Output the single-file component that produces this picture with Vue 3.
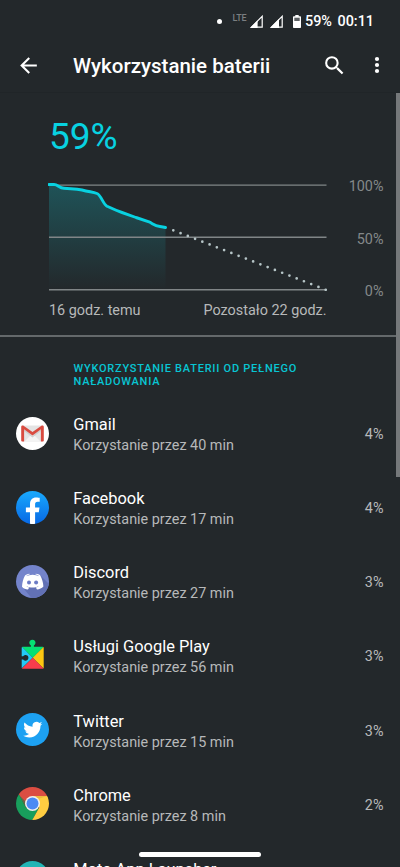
<script setup>
const apps = [
  { id: 'gmail', name: 'Gmail', time: '40 min', share: '4%' },
  { id: 'facebook', name: 'Facebook', time: '17 min', share: '4%' },
  { id: 'discord', name: 'Discord', time: '27 min', share: '3%' },
  { id: 'play', name: 'Usługi Google Play', time: '56 min', share: '3%' },
  { id: 'twitter', name: 'Twitter', time: '15 min', share: '3%' },
  { id: 'chrome', name: 'Chrome', time: '8 min', share: '2%' },
  { id: 'moto', name: 'Moto App Launcher' },
]
</script>

<template>
  <div class="screen">
    <header class="status">
      <span class="dot"></span>
      <span class="lte">LTE</span>
      <svg class="signal" viewBox="0 0 13 13"><path d="M1.3 12.2H12.2V1.3Z" fill="none" stroke="#fff" stroke-width="1.2" /><path d="M0 13H7.6V5.4Z" fill="#fff" /></svg>
      <svg class="signal second" viewBox="0 0 13 13"><path d="M1.3 12.2H12.2V1.3Z" fill="none" stroke="#fff" stroke-width="1.2" /><path d="M0 13H9V4Z" fill="#fff" /></svg>
      <svg class="battery" viewBox="0 0 8 13"><path d="M2.3 0H5.7V1.3H7.2Q8 1.3 8 2.1V12.2Q8 13 7.2 13H.8Q0 13 0 12.2V2.1Q0 1.3.8 1.3H2.3Z" fill="#fff" /><path d="M1.3 2.7H6.7V6H1.3Z" fill="#5d6163" /></svg>
      <span class="level">59%</span>
      <span class="clock">00:11</span>
    </header>

    <nav class="bar">
      <svg class="back" viewBox="0 0 24 24"><path d="M20 11H7.83l5.59-5.59L12 4l-8 8 8 8 1.41-1.41L7.83 13H20z" fill="#fff" /></svg>
      <h1>Wykorzystanie baterii</h1>
      <svg class="search" viewBox="0 0 24 24"><path d="M15.5 14h-.79l-.28-.27A6.47 6.47 0 0 0 16 9.5 6.5 6.5 0 1 0 9.5 16c1.61 0 3.09-.59 4.23-1.57l.27.28v.79l5 4.99L20.49 19zm-6 0a4.5 4.5 0 1 1 0-9 4.5 4.5 0 0 1 0 9z" fill="#fff" /></svg>
      <svg class="more" viewBox="0 0 6 18"><circle cx="3" cy="3" r="2.1" fill="#fff" /><circle cx="3" cy="9" r="2.1" fill="#fff" /><circle cx="3" cy="15" r="2.1" fill="#fff" /></svg>
    </nav>

    <main class="content">
      <section class="summary">
        <div class="percent">59%</div>
        <div class="graph">
          <svg class="plot" viewBox="0 0 280 110">
            <defs>
              <linearGradient id="fade" x1="0" y1="0" x2="0" y2="1">
                <stop offset="0" stop-color="#14c8d2" stop-opacity=".27" />
                <stop offset="1" stop-color="#14c8d2" stop-opacity="0" />
              </linearGradient>
            </defs>
            <path d="M1 3.5H6C10 3.5 11 7 16 7.3C25 8 28 7.8 34 9C42 11 45 11 49 12.5C53 14 55 23 59 25.2C65 28 68 29.5 74 31.5L88 36.5L101 40.8C106 43.5 107 45 117.5 46.3V109H1Z" fill="url(#fade)" />
            <path d="M1 4.1H278.500M1 56.3H278.500M1 108.700H278.500" stroke="#808587" stroke-width="1.4" />
            <path d="M125.3 49.3L277.8 108.8" stroke="#b6c5c7" stroke-width="2.7" stroke-linecap="round" stroke-dasharray="0 7.79" />
            <path d="M1 3.5H6C10 3.5 11 7 16 7.3C25 8 28 7.8 34 9C42 11 45 11 49 12.5C53 14 55 23 59 25.2C65 28 68 29.5 74 31.5L88 36.5L101 40.8C106 43.5 107 45 112 45.5Q115 45.800 117.5 46.5" fill="none" stroke="#08d2e1" stroke-width="2.9" stroke-linecap="round" stroke-linejoin="round" />
          </svg>
          <div class="scale"><span>100%</span><span>50%</span><span>0%</span></div>
        </div>
        <div class="range"><span>16 godz. temu</span><span class="left">Pozostało 22 godz.</span></div>
      </section>

      <h2>WYKORZYSTANIE BATERII OD PEŁNEGO NAŁADOWANIA</h2>

      <ul>
        <li v-for="app in apps" :key="app.id">
          <svg v-if="app.id === 'gmail'" class="icon" viewBox="0 0 33 33">
            <circle cx="16.5" cy="16.5" r="16.5" fill="#fff" />
            <path d="M6.5 8.5H26.5V24.5H6.5Z" fill="#e4e4e4" />
            <path d="M8.5 24.5L16.5 16.5L24.5 24.5Z" fill="#f4f4f4" />
            <path d="M8 11.5L16.5 19L25 11.5V14L16.5 20.5L8 14Z" fill="#cfcfcf" />
            <path d="M5.2 10C5.2 8.8 6 8.4 7.2 8.5L16.5 15.1L25.8 8.5C27 8.4 27.8 8.8 27.8 10V23.5Q27.8 24.5 26.8 24.5H24.900V12.300L16.5 18.400L8.100 12.300V24.500H6.200Q5.200 24.500 5.200 23.500Z" fill="#d94b40" />
          </svg>

          <svg v-else-if="app.id === 'facebook'" class="icon" viewBox="0 0 33 33">
            <defs><linearGradient id="fb" x1="0" y1="0" x2="0" y2="1"><stop offset="0" stop-color="#19a9fc" /><stop offset="1" stop-color="#0768e5" /></linearGradient></defs>
            <circle cx="16.5" cy="16.5" r="16.5" fill="url(#fb)" />
            <path d="M14 32.8V21.2H9.9V16.5H14V13C14 8.9 16.3 6.5 20.1 6.5C21.5 6.5 23.7 6.8 23.7 6.8V10.700H21.600C19.700 10.700 19.100 11.800 19.100 13V16.500H23.500L22.800 21.200H19.100V32.800Q16.500 33.200 14 32.800Z" fill="#fff" />
          </svg>

          <svg v-else-if="app.id === 'discord'" class="icon" viewBox="0 0 33 33">
            <defs><clipPath id="disc"><circle cx="16.5" cy="16.5" r="16.5" /></clipPath></defs>
            <circle cx="16.5" cy="16.5" r="16.5" fill="#7484cb" />
            <path d="M24 10L36 22V36H18L8 24Z" fill="#6271b5" clip-path="url(#disc)" />
            <path d="M13.5 8.8C11.2 8.9 9.7 9.8 9 10.5C7.2 13.7 6.2 17.5 6 21.7C7.5 23.6 9.7 24.4 12 24.4L13.2 22.5C11.8 22.1 10.9 21.5 10.3 20.9C14 23 19 23 22.7 20.9C22.1 21.5 21.2 22.1 19.8 22.5L21 24.4C23.3 24.4 25.9 23.5 27.4 21.6C27.2 17.5 26 13.5 24.3 10.5C23.4 9.7 21.8 8.9 19.7 8.8L19.3 9.3C21.5 9.9 22.5 10.6 23.3 11.3C19 9.3 14.3 9.3 10 11.3C10.8 10.6 11.9 9.9 13.900 9.300Z" fill="#fff" />
            <circle cx="13" cy="17.5" r="2" fill="#6c7cc5" /><circle cx="20.1" cy="17.5" r="2" fill="#6c7cc5" />
          </svg>

          <svg v-else-if="app.id === 'play'" class="icon" viewBox="0 0 33 33">
            <defs>
              <clipPath id="puzzle"><path d="M6.7 7.7H14.9V6.5A3.1 3.1 0 1 1 17.9 6.500V7.700H26.700Q27.700 7.700 27.700 8.700V28.700Q27.700 29.700 26.700 29.700H6.700Q5.700 29.700 5.700 28.700V20.400H7.100A2.900 2.900 0 1 0 7.100 17.200H5.700V8.700Q5.700 7.700 6.700 7.700Z" /></clipPath>
            </defs>
            <g clip-path="url(#puzzle)">
              <path d="M5.5 7.7V0H28V7.7L16.7 18.7Z" fill="#05e073" />
              <path d="M5 7L16.7 18.7L5 30Z" fill="#23c8f5" />
              <path d="M28 7.4V30L16.7 18.7Z" fill="#fcc711" />
              <path d="M5.4 30L16.7 18.7L28 30Z" fill="#f83c4c" />
            </g>
          </svg>

          <svg v-else-if="app.id === 'twitter'" class="icon" viewBox="0 0 33 33">
            <circle cx="16.5" cy="16.5" r="16.5" fill="#1da1f2" />
            <path transform="translate(7.2 7) scale(.8)" d="M23.953 4.57a10 10 0 0 1-2.825.775 4.958 4.958 0 0 0 2.163-2.723c-.951.555-2.005.959-3.127 1.184a4.92 4.92 0 0 0-8.384 4.482C7.69 8.095 4.067 6.13 1.64 3.162a4.822 4.822 0 0 0-.666 2.475c0 1.71.87 3.213 2.188 4.096a4.904 4.904 0 0 1-2.228-.616v.06a4.923 4.923 0 0 0 3.946 4.827 4.996 4.996 0 0 1-2.212.085 4.936 4.936 0 0 0 4.604 3.417 9.867 9.867 0 0 1-6.102 2.105c-.39 0-.779-.023-1.17-.067a13.995 13.995 0 0 0 7.557 2.209c9.053 0 13.998-7.496 13.998-13.985 0-.21 0-.42-.015-.63A9.935 9.935 0 0 0 24 4.59z" fill="#fff" />
          </svg>

          <svg v-else-if="app.id === 'chrome'" class="icon" viewBox="0 0 33 33">
            <defs><clipPath id="chr"><circle cx="16.5" cy="16.5" r="16.5" /></clipPath></defs>
            <g clip-path="url(#chr)">
              <path d="M0 0H33V9H16.5L9.7 20L2.5 7.5Z" fill="#db4d42" />
              <path d="M3 7.5L9.8 20.2L17 24L22.8 21L15.8 34H0V7Z" fill="#189e5c" />
              <path d="M16.5 9H34V34H15.7L23.2 20.5Z" fill="#ffcd41" />
              <path d="M16.5 9H31L22 12Z" fill="#e0a93a" opacity=".55" />
              <path d="M9.8 20.2L3 8L10 15Z" fill="#137d4a" opacity=".6" />
            </g>
            <circle cx="16.5" cy="16.5" r="7.5" fill="#f1f1f1" /><circle cx="16.5" cy="16.5" r="6" fill="#4a8af4" />
          </svg>

          <svg v-else class="icon" viewBox="0 0 33 33"><circle cx="16.5" cy="16.5" r="16.5" fill="#21b5b5" /></svg>

          <div class="info">
            <div class="name">{{ app.name }}</div>
            <div class="time"><template v-if="app.time">Korzystanie przez {{ app.time }}</template></div>
          </div>
          <span v-if="app.share" class="share">{{ app.share }}</span>
        </li>
      </ul>
    </main>
    <div class="scrollbar"></div>
    <div class="home"></div>
  </div>
</template>

<style>
body { margin: 0; background: #23282b; }
</style>

<style scoped>
.screen { position: relative; width: 400px; height: 867px; overflow: hidden; background: #23282b; color: #fff; font-family: Roboto, sans-serif; display: flex; flex-direction: column; }
svg { display: block; flex: none; }
.status { box-sizing: border-box; height: 42px; flex: none; display: flex; align-items: center; padding-left: 216.5px; white-space: nowrap; }
.dot { width: 5px; height: 5px; border-radius: 50%; background: #fff; }
.lte { width: 28px; margin: -7px -10px 0 11px; font-size: 9px; font-weight: 500; line-height: 10px; letter-spacing: -.1px; color: #7b7f81; }
.signal { width: 13px; height: 13px; margin-left: -1px; }
.second { margin-left: 7.5px; }
.battery { width: 8px; height: 13px; margin-left: 10px; }
.level, .clock { font-size: 14.4px; font-weight: 500; line-height: 20px; margin-top: 2px; }
.level { width: 27px; margin-left: 4px; }
.clock { margin-left: 5.5px; }
.bar { box-sizing: border-box; height: 51px; flex: none; display: flex; align-items: center; padding: 0 20px 4px 16px; border-bottom: 1px solid #202528; }
.back { width: 25px; height: 25px; }
h1 { flex: 1; margin: 2px 0 0 32px; font-size: 20.5px; font-weight: 500; line-height: 26px; white-space: nowrap; }
.search { width: 25px; height: 25px; margin-right: 27px; }
.more { width: 6px; height: 18px; }
.content { flex: 1; min-height: 0; overflow: hidden; }
.summary { box-sizing: border-box; height: 244px; padding-top: 22px; border-bottom: 2px solid #64696b; }
.percent { margin-left: 49px; height: 44px; font-size: 37px; line-height: 44px; color: #08d2e1; }
.graph { display: flex; margin-top: 22px; padding: 0 16.5px 0 48px; height: 110px; justify-content: space-between; }
.plot { width: 280px; height: 110px; }
.scale { display: flex; flex-direction: column; justify-content: space-between; height: 121px; margin-top: -2px; text-align: right; font-size: 14.4px; line-height: 16px; color: #84888a; }
.range { display: flex; justify-content: space-between; margin: 11px 73.5px 0 49px; font-size: 14.4px; line-height: 18px; color: #b7b9ba; }
h2 { width: 270px; margin: 25px 0 0 73.5px; font-size: 11px; font-weight: 500; letter-spacing: .76px; line-height: 13px; color: #08c5d3; }
ul { list-style: none; margin: 8px 0 0; padding: 0; }
li { box-sizing: border-box; display: flex; align-items: center; height: 74.15px; padding: 0 16.5px 0 16px; }
.icon { width: 33px; height: 33px; }
.info { flex: 1; margin: 3px 0 0 24.3px; white-space: nowrap; }
.name { height: 21px; font-size: 16.4px; line-height: 21px; }
.time { height: 20px; font-size: 14.4px; line-height: 21px; color: #b7b9ba; }
.share { margin-top: 3px; font-size: 14.4px; color: #b7b9ba; }
.scrollbar { position: absolute; top: 93px; right: 0; width: 4px; height: 384px; background: #75787a; }
.home { position: absolute; left: 139px; top: 852px; width: 122px; height: 5px; border-radius: 3px; background: #fff; }
</style>
